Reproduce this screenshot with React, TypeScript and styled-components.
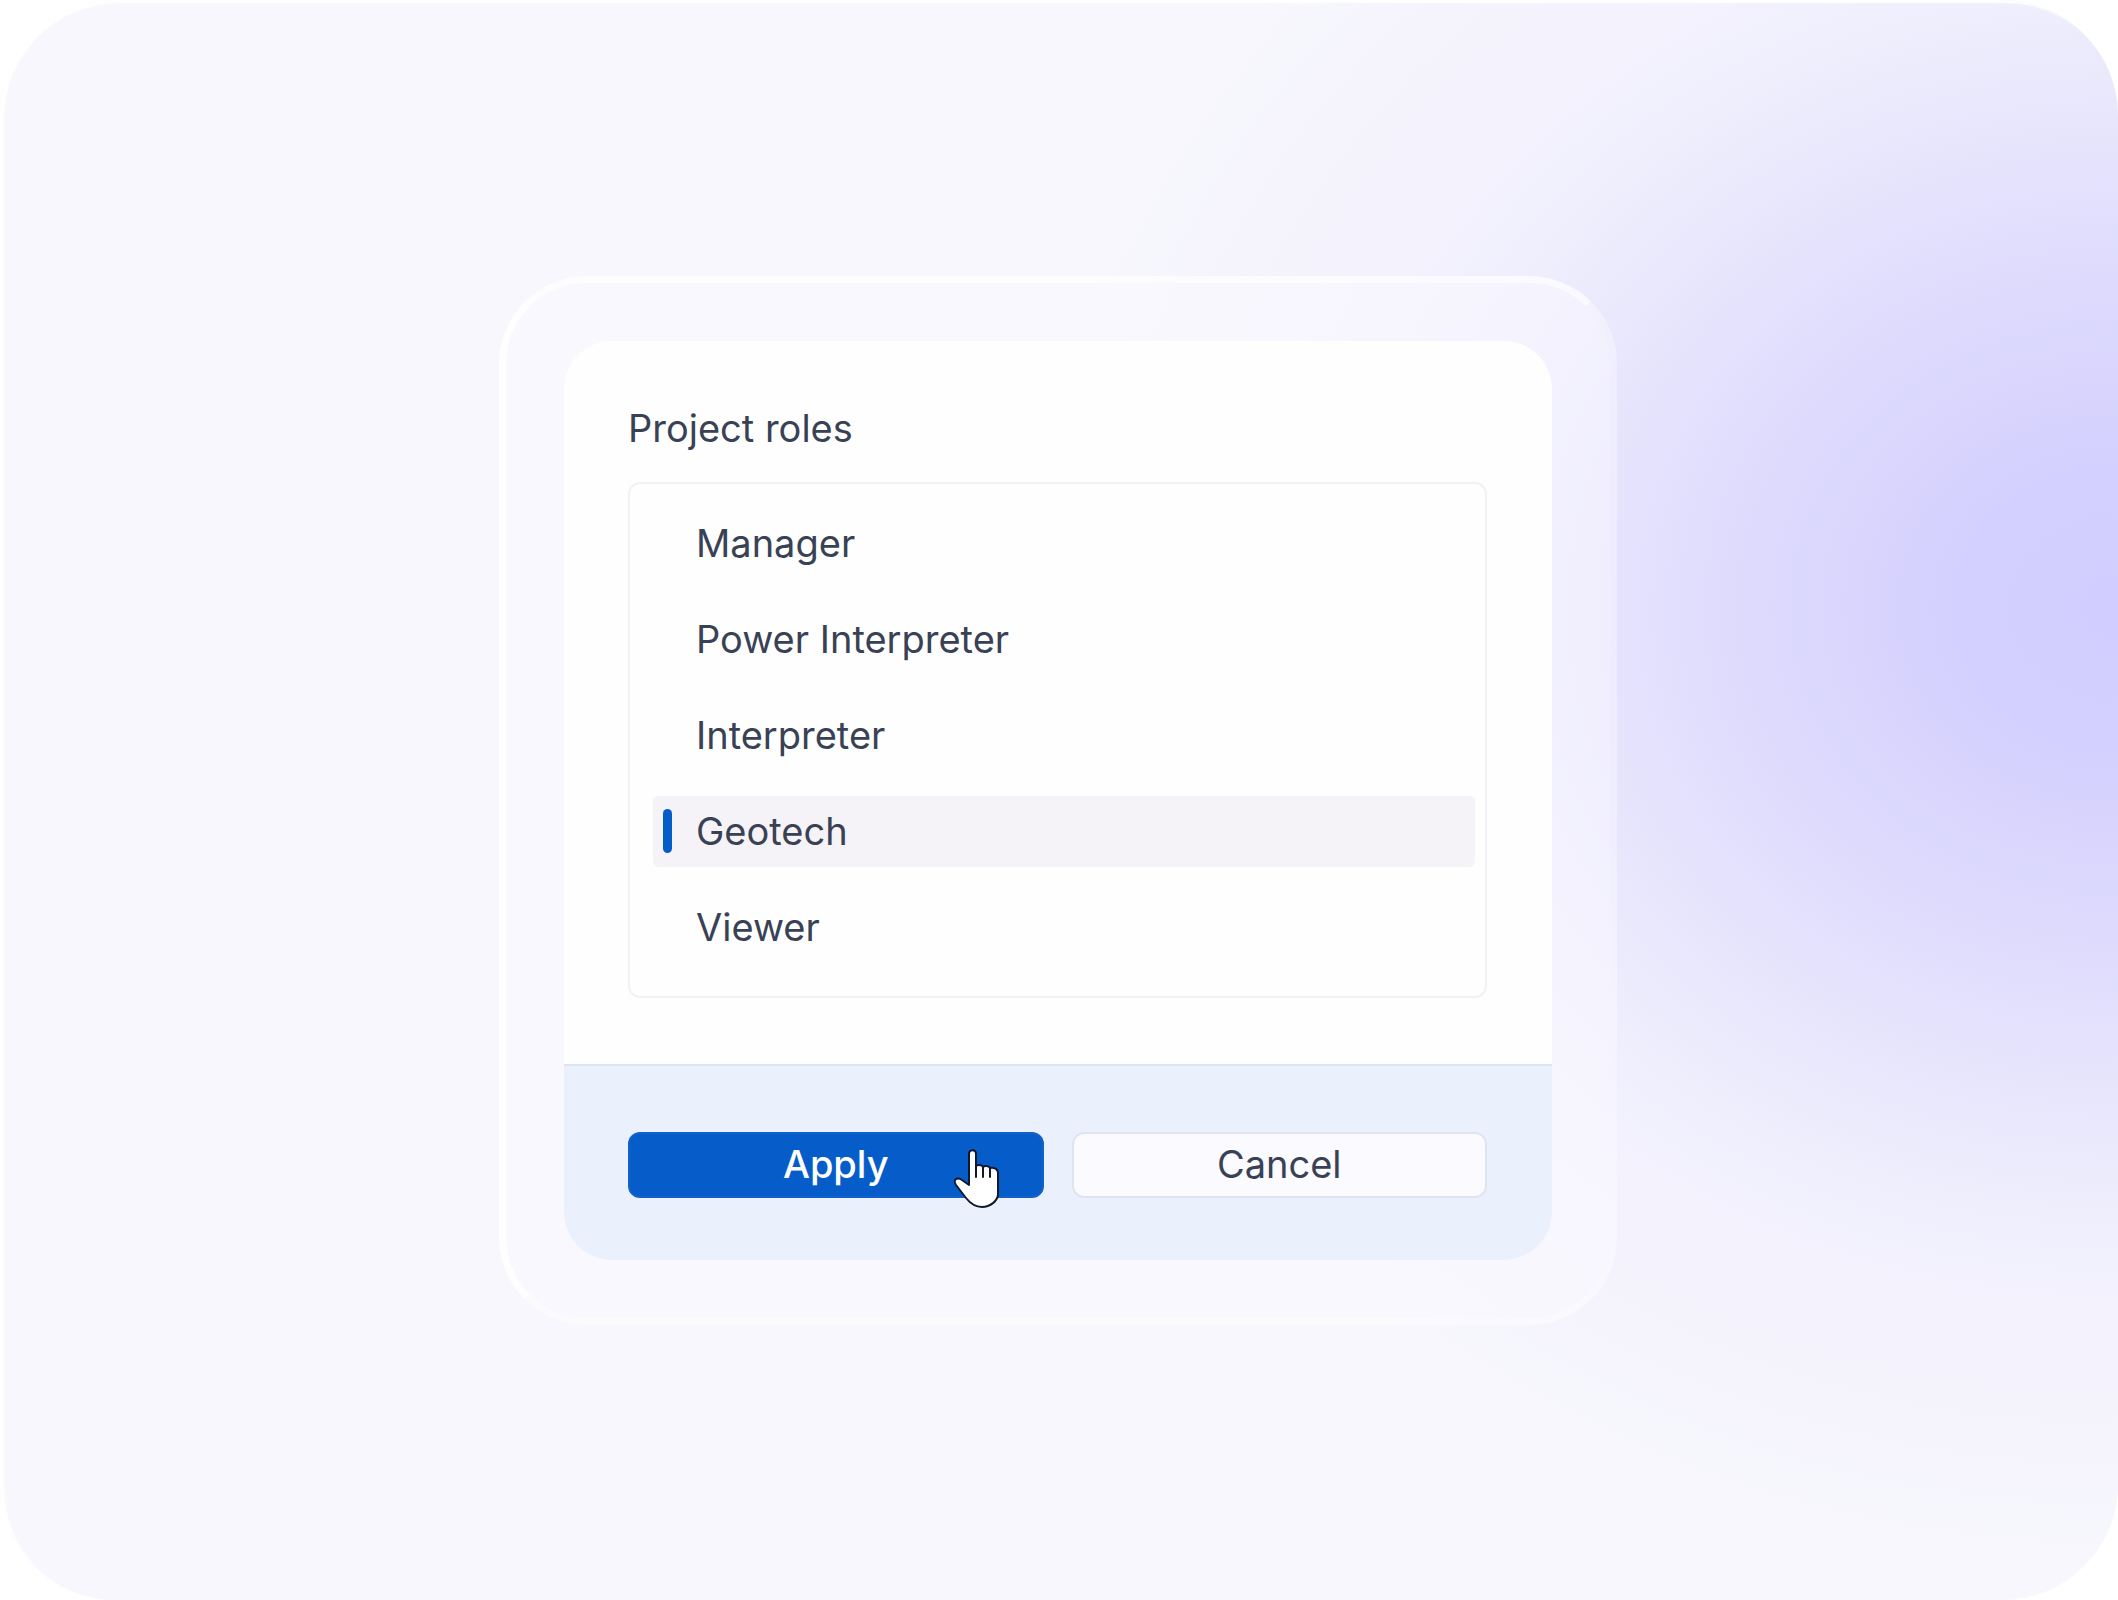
import React, { useState } from "react";
import styled, { createGlobalStyle } from "styled-components";

const GlobalStyle = createGlobalStyle`
  *, *::before, *::after { box-sizing: border-box; }
  body { margin: 0; background: #ffffff; }
`;

const Stage = styled.main`
  min-height: 100vh;
  display: flex;
  justify-content: center;
  align-items: center;
  padding-right: 2px;
  border-radius: 116px;
  box-shadow: inset 4px 3px 2px #ffffff;
  font-family: Inter, "Liberation Sans", sans-serif;
  color: #394255;
  background:
    radial-gradient(
      ellipse 1100px 960px at 100% 38%,
      #d1ceff 0%,
      #d3d0ff 15%,
      #d9d5fd 24%,
      #dedbfd 35%,
      #e4e2fd 45%,
      #e9e8fc 54%,
      #efeefd 63%,
      #f3f2fd 74%,
      #f5f4fd 86%,
      #f7f7fd 100%
    ),
    #f7f7fd;
`;

const Frame = styled.div`
  width: 1118px;
  max-width: 100%;
  padding: 58px;
  border: 7px solid;
  border-color: rgba(255, 255, 255, 0.7) rgba(255, 255, 255, 0.35)
    rgba(255, 255, 255, 0.45) rgba(255, 255, 255, 0.85);
  border-radius: 88px;
  background: rgba(252, 250, 255, 0.5);
  background-clip: padding-box;
`;

const Dialog = styled.form`
  overflow: hidden;
  border-radius: 48px;
  background: #fefefe;
`;

const Content = styled.fieldset`
  margin: 0;
  border: 0;
  padding: 63px 65px 66px 64px;
`;

const Title = styled.legend`
  float: left;
  width: 100%;
  margin-bottom: 30px;
  padding: 0;
  font-size: 38px;
  line-height: 48px;
`;

const RoleList = styled.div`
  clear: both;
  display: flex;
  flex-direction: column;
  gap: 25px;
  padding: 24px 10px 33px 23px;
  border: 2px solid #f3f1f5;
  border-radius: 12px;
`;

const RoleRow = styled.label<{ $selected: boolean }>`
  display: flex;
  align-items: center;
  gap: 24px;
  height: 71px;
  padding-left: 10px;
  border-radius: 6px;
  background: ${(p) => (p.$selected ? "#f5f3f7" : "transparent")};
  font-size: 38px;
  line-height: 48px;
`;

const RoleMarker = styled.input`
  appearance: none;
  width: 9px;
  height: 44px;
  margin: 0;
  border-radius: 5px;

  &:checked {
    background: #065dca;
  }
`;

const Footer = styled.footer`
  display: grid;
  grid-template-columns: 1fr 1fr;
  gap: 28px;
  padding: 66px 65px 62px 64px;
  border-top: 2px solid #dce5f2;
  background: #eaf1fd;
`;

const Button = styled.button<{ $primary?: boolean }>`
  position: relative;
  height: 66px;
  padding: 0 0 2px;
  border: 2px solid ${(p) => (p.$primary ? "#1160cc" : "#dfe4f3")};
  border-radius: 12px;
  background: ${(p) => (p.$primary ? "#065dca" : "#fbfaff")};
  color: ${(p) => (p.$primary ? "#ffffff" : "#394255")};
  font-family: inherit;
  font-size: 38px;
  font-weight: ${(p) => (p.$primary ? 500 : 400)};
  line-height: 48px;
`;

const Pointer = styled.svg`
  position: absolute;
  right: 42px;
  top: 15px;
  width: 47px;
  height: 60px;
`;

const roles = ["Manager", "Power Interpreter", "Interpreter", "Geotech", "Viewer"];

export default function App() {
  const [selected, setSelected] = useState("Geotech");

  return (
    <>
      <GlobalStyle />
      <Stage>
        <Frame>
          <Dialog onSubmit={(e) => e.preventDefault()}>
            <Content>
              <Title>Project roles</Title>
              <RoleList>
                {roles.map((role) => (
                  <RoleRow key={role} $selected={role === selected}>
                    <RoleMarker
                      type="radio"
                      name="role"
                      value={role}
                      checked={role === selected}
                      onChange={() => setSelected(role)}
                    />
                    {role}
                  </RoleRow>
                ))}
              </RoleList>
            </Content>
            <Footer>
              <Button type="submit" $primary>
                Apply
                <Pointer viewBox="0 0 47 60" aria-hidden="true">
                  <path
                    d="M16 5C16 0 23 0 23 5V17C25 15 29 16 30 18C32 16 36 17 37 19C41 18 45 20 45 24V45C45 52 37 58 29 58C22 58 17 54 13 49L3 36C-1 30 5 28 9 31L16 36Z"
                    fill="#ffffff"
                    stroke="#10182c"
                    strokeWidth="2"
                    strokeLinejoin="round"
                  />
                  <path
                    d="M23 16V28M30 18V28M37 19V28"
                    fill="none"
                    stroke="#10182c"
                    strokeWidth="2"
                    strokeLinecap="round"
                  />
                </Pointer>
              </Button>
              <Button type="button">Cancel</Button>
            </Footer>
          </Dialog>
        </Frame>
      </Stage>
    </>
  );
}
